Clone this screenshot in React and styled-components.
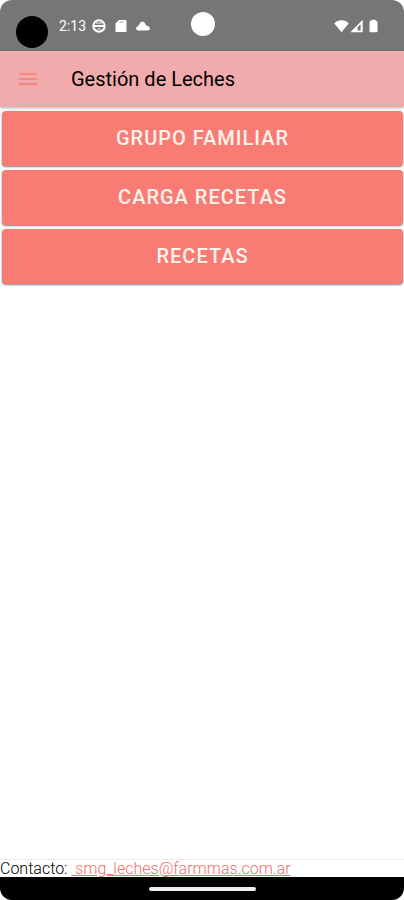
import React from 'react';
import styled, { createGlobalStyle } from 'styled-components';

const GlobalStyle = createGlobalStyle`
    * {
        box-sizing: border-box;
    }

    body {
        margin: 0;
        background: #fff;
        font-family: Roboto, "Liberation Sans", sans-serif;
    }
`

const Screen = styled.div`
    display: flex;
    flex-direction: column;
    min-height: 100vh;
    border-radius: 12px;
    overflow: hidden;
    background: #fff;
`

const StatusBar = styled.div`
    display: grid;
    grid-template-columns: 1fr auto 1fr;
    height: 51px;
    padding: 0 26px 0 16px;
    background: #767676;
    color: #fff;
`

const StatusGroup = styled.div`
    display: flex;
    align-items: center;
    justify-content: ${props => props.$end ? 'flex-end' : 'flex-start'};
    gap: ${props => props.$gap};

    svg {
        display: block;
        flex: none;
    }
`

const Camera = styled.span`
    width: 32px;
    height: 32px;
    margin: 12px 5px 0 0;
    border-radius: 50%;
    background: #000;
`

const Clock = styled.span`
    font-size: 14px;
    line-height: 16px;
`

const Dot = styled.span`
    width: 24px;
    height: 24px;
    margin: 12px 0 0 12px;
    border-radius: 50%;
    background: #fff;
`

const AppBar = styled.header`
    display: flex;
    align-items: center;
    height: 56px;
    padding: 0 16px;
    gap: 31px;
    background: #f2abad;
    box-shadow: 0 1px 3px rgba(0, 0, 0, 0.3);
`

const MenuButton = styled.button`
    display: flex;
    align-items: center;
    justify-content: center;
    width: 24px;
    height: 24px;
    padding: 0;
    border: 0;
    background: none;
    color: #f3877f;
`

const Title = styled.h1`
    margin: 0;
    font-size: 20px;
    line-height: 24px;
    font-weight: 400;
    color: #000;
`

const Options = styled.main`
    flex: 1;
    display: flex;
    flex-direction: column;
    gap: 4px;
    padding: 4px 1px 4px 2px;
`

const OptionButton = styled.button`
    height: 55px;
    padding: 0 16px 2px;
    border: 0;
    border-radius: 4px;
    background: #f87c73;
    box-shadow: 0 1px 2px rgba(0, 0, 0, 0.5);
    color: #fff3ee;
    font-family: inherit;
    font-size: 20px;
    font-weight: 500;
    line-height: 24px;
    letter-spacing: 1px;
    text-transform: uppercase;
`

const Contact = styled.footer`
    border-top: 1px solid #ececec;
    font-size: 16px;
    font-weight: 300;
    line-height: 17px;
    color: #000;
    white-space: pre;
`

const MailLink = styled.a`
    color: #f0706a;
    text-decoration: underline;
`

const NavBar = styled.div`
    display: flex;
    align-items: center;
    justify-content: center;
    height: 23px;
    background: #000;
`

const Handle = styled.span`
    width: 107px;
    height: 4px;
    border-radius: 2px;
    background: #eee;
`

const options = ['Grupo Familiar', 'Carga Recetas', 'Recetas']

const GlobeIcon = () => (
    <svg width="14" height="14" viewBox="0 0 14 14" fill="none" stroke="currentColor">
        <circle cx="7" cy="7" r="5.7" strokeWidth="2" />
        <path d="M1.5 7h11" strokeWidth="2" />
        <path d="M4 4h6M5.500 10h3" strokeWidth="1.2" />
    </svg>
)

const CardIcon = () => (
    <svg width="12" height="14" viewBox="0 0 12 14">
        <path d="M4 1h6.400c.7 0 1.100.4 1.100 1.100v9.800c0 .7-.4 1.100-1.100 1.100H1.600C.9 13 .5 12.600.5 11.900V4.500z" fill="currentColor" />
        <path d="M4.500 3.200h5" stroke="#767676" strokeWidth="1" strokeDasharray="1 .6" />
    </svg>
)

const CloudIcon = () => (
    <svg width="14" height="10" viewBox="0 0 14 10" fill="currentColor">
        <path d="M2.200 9.500C-.5 9.500-.5 5.800 2 5.300 2.500 4.900 3 3.500 3.700 2.500 5 .2 8 .2 9.200 2.600c.3.700.7 1.500 1.100 1.900 1.700.4 3.600 1.500 3.600 3.100 0 1.300-.9 1.900-1.900 1.900z" />
    </svg>
)

const WifiIcon = () => (
    <svg width="15" height="14" viewBox="0 0 15 14" fill="currentColor">
        <path d="M7.500 13.300.3 4.600C3.600.2 11.400.2 14.700 4.600z" />
    </svg>
)

const SignalIcon = () => (
    <svg width="13" height="14" viewBox="0 0 13 14">
        <path d="M.3 13.300 12.700.8v12.500z" fill="currentColor" />
        <path d="M7.800 11.500V8.300L10.600 5.300v6.200z" fill="#767676" />
    </svg>
)

const BatteryIcon = () => (
    <svg width="14" height="14" viewBox="-5 0 14 14" fill="currentColor">
        <path d="M2.500.8h4v.8c1.300.2 2 1 2 2V12c0 .8-.4 1.300-1.200 1.300H1.700C.9 13.300.5 12.800.5 12V3.600c0-1 .7-1.800 2-2z" />
    </svg>
)

const MenuIcon = () => (
    <svg width="18" height="14" viewBox="0 0 18 14" stroke="currentColor" strokeWidth="2">
        <path d="M0 2h18M0 7h18M0 12h18" />
    </svg>
)

class App extends React.Component {
    render(){
        return(
            <>
                <GlobalStyle />
                <Screen>
                    <StatusBar>
                        <StatusGroup $gap="6px">
                            <Camera />
                            <Clock>2:13</Clock>
                            <StatusGroup $gap="9px">
                                <GlobeIcon />
                                <CardIcon />
                                <CloudIcon />
                            </StatusGroup>
                        </StatusGroup>
                        <Dot />
                        <StatusGroup $end $gap="1px">
                            <WifiIcon />
                            <SignalIcon />
                            <BatteryIcon />
                        </StatusGroup>
                    </StatusBar>
                    <AppBar>
                        <MenuButton aria-label="Menú"><MenuIcon /></MenuButton>
                        <Title>Gestión de Leches</Title>
                    </AppBar>
                    <Options>
                        {options.map(option => (
                            <OptionButton key={option}>{option}</OptionButton>
                        ))}
                    </Options>
                    <Contact>
                        Contacto: <MailLink href="mailto:smg_leches@farmmas.com.ar">{' smg_leches@farmmas.com.ar'}</MailLink>
                    </Contact>
                    <NavBar><Handle /></NavBar>
                </Screen>
            </>
        )
    }
}

export default App;
